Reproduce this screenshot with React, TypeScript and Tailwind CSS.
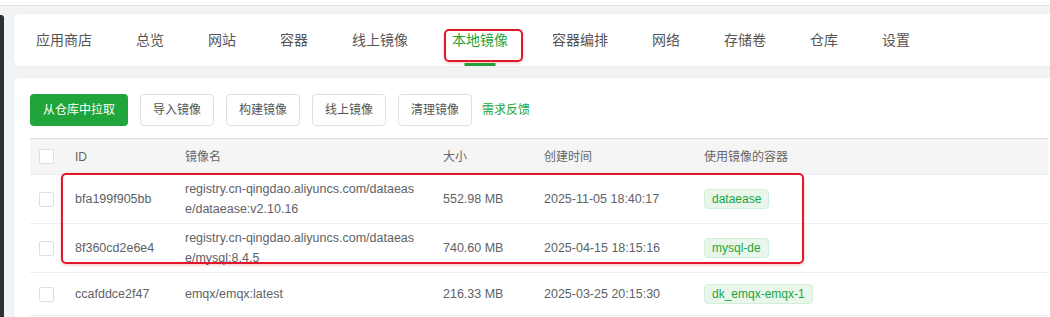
const tabs = ["应用商店", "总览", "网站", "容器", "线上镜像", "本地镜像", "容器编排", "网络", "存储卷", "仓库", "设置"];

const buttons = ["导入镜像", "构建镜像", "线上镜像", "清理镜像"];

const rows = [
  {
    id: "bfa199f905bb",
    name: ["registry.cn-qingdao.aliyuncs.com/dataeas", "e/dataease:v2.10.16"],
    size: "552.98 MB",
    created: "2025-11-05 18:40:17",
    tag: "dataease",
  },
  {
    id: "8f360cd2e6e4",
    name: ["registry.cn-qingdao.aliyuncs.com/dataeas", "e/mysql:8.4.5"],
    size: "740.60 MB",
    created: "2025-04-15 18:15:16",
    tag: "mysql-de",
  },
  {
    id: "ccafddce2f47",
    name: ["emqx/emqx:latest"],
    size: "216.33 MB",
    created: "2025-03-25 20:15:30",
    tag: "dk_emqx-emqx-1",
  },
];

const font = {
  fontFamily: '"Liberation Sans", "Noto Sans CJK SC", sans-serif',
};

const grid = "grid grid-cols-[33px_110px_258px_101px_160px_1fr] items-center";

const Checkbox = () => (
  <div className="w-[15px] h-[15px] ml-[9px] rounded-[2px] border border-[#dcdfe6] bg-white" />
);

const App = () => {
  return (
    <div className="w-[1050px] h-[317px] overflow-hidden bg-[#f2f3f5]" style={font}>
      <div className="h-[6px] bg-white border-b border-[#e2e2e2]" />
      <div className="flex h-full">
        <div className="w-[4px] mt-[9px] bg-[#2b2f36] rounded-tr-[3px] shrink-0" />
        <div className="flex-1 pt-[8px] pl-[10px]">
          {/* tabs */}
          <div className="relative h-[52px] w-[1050px] bg-white rounded-md shadow-[0_1px_3px_rgba(0,0,0,0.04)] flex items-center pl-[22px] gap-[44px] text-[14px] text-[#555]">
            {tabs.map((t) => (
              <div key={t} className="relative h-full flex items-center">
                <span className={t === "本地镜像" ? "text-[#20a53a]" : ""}>{t}</span>
                {t === "本地镜像" && (
                  <>
                    <div className="absolute bottom-0 left-1/2 -translate-x-1/2 w-[31px] h-[3px] bg-[#20a53a]" />
                    <div className="absolute left-[-8px] right-[-15px] top-[15px] h-[33px] border-[2.5px] border-[#e3172c] rounded-[5px] shadow-[0_1px_3px_rgba(200,0,0,0.25)]" />
                  </>
                )}
              </div>
            ))}
          </div>

          {/* main card */}
          <div className="mt-[12px] w-[1050px] bg-white rounded-md p-4 shadow-[0_1px_3px_rgba(0,0,0,0.04)]">
            <div className="flex items-center gap-3 text-[12px]">
              <button className="h-[32px] px-[13px] rounded-[4px] bg-[#20a53a] text-white">从仓库中拉取</button>
              {buttons.map((b) => (
                <button key={b} className="h-[32px] px-[12px] rounded-[4px] border border-[#dcdfe6] bg-white text-[#555]">
                  {b}
                </button>
              ))}
              <span className="text-[#20a53a] -ml-[2px]">需求反馈</span>
            </div>

            <div className="relative mt-3 text-[12.5px] text-[#606266]">
              <div className={`${grid} h-[37px] bg-[#f5f5f5] border-t border-[#dcdcdc] border-b border-b-[#ebeef5] text-[12px] text-[#666]`}>
                <Checkbox />
                <div className="pl-3">ID</div>
                <div className="pl-3">镜像名</div>
                <div className="pl-3">大小</div>
                <div className="pl-3">创建时间</div>
                <div className="pl-3">使用镜像的容器</div>
              </div>
              {rows.map((r, i) => (
                <div key={r.id} className={`${grid} ${i === 2 ? "h-[43px]" : "h-[49px]"} border-b border-[#ebeef5]`}>
                  <Checkbox />
                  <div className="pl-3">{r.id}</div>
                  <div className="pl-3 leading-[20px] whitespace-nowrap">
                    {r.name.map((l) => (
                      <div key={l}>{l}</div>
                    ))}
                  </div>
                  <div className="pl-3">{r.size}</div>
                  <div className="pl-3">{r.created}</div>
                  <div className="pl-3">
                    <span className="inline-flex items-center h-[20px] px-[7px] rounded-[4px] bg-[#e9f6ec] border border-[#d3eed9] text-[12px] text-[#20a53a]">
                      {r.tag}
                    </span>
                  </div>
                </div>
              ))}
              <div className="absolute left-[31px] top-[35px] w-[743px] h-[91px] border-[2.5px] border-[#e3172c] rounded-[5px] shadow-[0_1px_3px_rgba(200,0,0,0.25)]" />
            </div>
          </div>
        </div>
      </div>
    </div>
  );
};

export default App;
